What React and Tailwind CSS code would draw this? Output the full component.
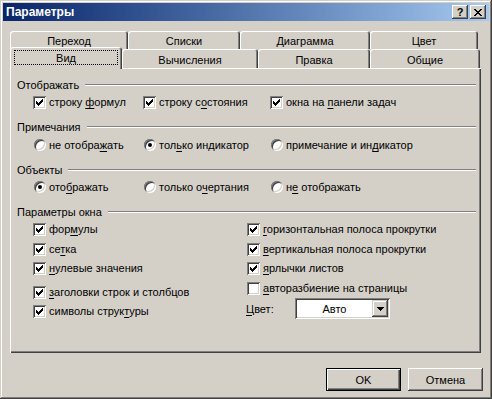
import React from 'react';

const raised = 'shadow-[inset_-1px_-1px_#404040,inset_1px_1px_#ffffff,inset_-2px_-2px_#808080]';
const sunken = 'shadow-[inset_1px_1px_#808080,inset_-1px_-1px_#ffffff,inset_2px_2px_#404040,inset_-2px_-2px_#d4d0c8]';

function U({ children }) {
    return <span className="underline underline-offset-[2px] decoration-1">{children}</span>;
}

function CheckBox({ checked }) {
    return (
        <span className={`w-[13px] h-[13px] shrink-0 bg-white flex items-center justify-center ${sunken}`}>
            {checked && (
                <svg width="7" height="7" viewBox="0 0 7 7" shapeRendering="crispEdges">
                    <path d="M6 0h1v1h-1z M5 1h2v1h-2z M0 2h1v1h-1z M4 2h3v1h-3z M0 3h2v1h-2z M3 3h3v1h-3z M0 4h5v1h-5z M1 5h3v1h-3z M2 6h1v1h-1z" fill="#000" />
                </svg>
            )}
        </span>
    );
}

function Radio({ checked }) {
    return (
        <span className="w-[13px] h-[13px] shrink-0 flex items-center justify-end">
            <span className="w-[12px] h-[12px] rounded-full bg-white flex items-center justify-center shadow-[inset_1px_1px_#808080,inset_-1px_-1px_#ffffff,inset_2px_2px_#404040,inset_-2px_-2px_#d4d0c8]">
                {checked && <span className="w-[4px] h-[4px] rounded-full bg-black" />}
            </span>
        </span>
    );
}

function Item({ radio, checked, w, className = '', children }) {
    return (
        <div className={`flex items-center gap-[3px] h-[14px] ${w || ''} ${className}`}>
            {radio ? <Radio checked={checked} /> : <CheckBox checked={checked} />}
            <span className="whitespace-nowrap">{children}</span>
        </div>
    );
}

function GroupLabel({ children, className = '' }) {
    return (
        <div className={`flex items-center h-[14px] ${className}`}>
            <span className="whitespace-nowrap">{children}</span>
            <div className="flex-1 ml-[6px] h-[2px] border-t border-t-[#808080] border-b border-b-white" />
        </div>
    );
}

function Tab({ w, children }) {
    return (
        <div className={`${w} flex items-center justify-center pt-[2px] rounded-t-[3px] shadow-[inset_1px_1px_#ffffff,inset_-1px_0_#404040,inset_-2px_0_#808080]`}>
            {children}
        </div>
    );
}

function Button({ def, children }) {
    return (
        <div className={`w-[75px] h-[23px] flex items-center justify-center ${def ? 'border border-black shadow-[inset_1px_1px_#ffffff,inset_-1px_-1px_#404040,inset_-2px_-2px_#808080]' : raised}`}>
            {children}
        </div>
    );
}

export default function App() {
    return (
        <div className="w-[492px] h-[399px] bg-[#d4d0c8] p-[3px] flex flex-col text-[11px] leading-[14px] text-black font-['Liberation_Sans',Arial,sans-serif] shadow-[inset_-1px_-1px_#404040,inset_1px_1px_#d4d0c8,inset_-2px_-2px_#808080,inset_2px_2px_#ffffff]">
            {/* title bar */}
            <div className="h-[18px] flex items-center justify-between pl-[3px] pr-[3px] bg-linear-to-r from-[#0a246a] to-[#a6caf0]">
                <span className="text-white font-bold text-[12px]">Параметры</span>
                <div className="flex gap-[2px]">
                    <div className={`w-[16px] h-[14px] bg-[#d4d0c8] flex items-center justify-center font-bold text-[11px] leading-none ${raised}`}>?</div>
                    <div className={`w-[16px] h-[14px] bg-[#d4d0c8] flex items-center justify-center ${raised}`}>
                        <svg width="8" height="7" viewBox="0 0 8 7" shapeRendering="crispEdges">
                            <path d="M0 0h2v1h-2z M6 0h2v1h-2z M1 1h2v1h-2z M5 1h2v1h-2z M2 2h4v1h-4z M3 3h2v1h-2z M2 4h4v1h-4z M1 5h2v1h-2z M5 5h2v1h-2z M0 6h2v1h-2z M6 6h2v1h-2z" fill="#000" />
                        </svg>
                    </div>
                </div>
            </div>

            <div className="flex flex-col pl-[7px] pt-[10px]">
                {/* tabs */}
                <div className="flex h-[18px]">
                    <Tab w="w-[118px] h-[18px]">Переход</Tab>
                    <Tab w="w-[112px] h-[18px]">Списки</Tab>
                    <Tab w="w-[130px] h-[18px]">Диаграмма</Tab>
                    <Tab w="w-[108px] h-[18px]">Цвет</Tab>
                </div>
                <div className="flex items-end h-[21px] -mt-[2px]">
                    <div className="relative z-10 w-[112px] h-[22px] -mb-[1px] bg-[#d4d0c8] rounded-t-[3px] px-[4px] pt-[3px] pb-[4px] flex shadow-[inset_1px_1px_#ffffff,inset_-1px_0_#404040,inset_-2px_0_#808080]">
                        <div className="flex-1 border border-dotted border-black flex items-center justify-center">Вид</div>
                    </div>
                    <Tab w="w-[136px] h-[19px]">Вычисления</Tab>
                    <Tab w="w-[112px] h-[19px]">Правка</Tab>
                    <Tab w="w-[110px] h-[19px]">Общие</Tab>
                </div>

                {/* panel */}
                <div className="w-[471px] h-[285px] flex flex-col pl-[7px] pr-[5px] pt-[10px] shadow-[inset_1px_1px_#ffffff,inset_-1px_-1px_#404040,inset_-2px_-2px_#808080]">
                    <GroupLabel>Отображать</GroupLabel>
                    <div className="flex pl-[16px] mt-[3px]">
                        <Item checked w="w-[110px]">строку <U>ф</U>ормул</Item>
                        <Item checked w="w-[127px]">строку с<U>о</U>стояния</Item>
                        <Item checked>окна на <U>п</U>анели задач</Item>
                    </div>

                    <GroupLabel className="mt-[11px]">Примечания</GroupLabel>
                    <div className="flex pl-[16px] mt-[4px]">
                        <Item radio w="w-[110px]">не отобра<U>ж</U>ать</Item>
                        <Item radio checked w="w-[127px]">тол<U>ь</U>ко индикатор</Item>
                        <Item radio>примечание и ин<U>д</U>икатор</Item>
                    </div>

                    <GroupLabel className="mt-[11px]">Объекты</GroupLabel>
                    <div className="flex pl-[16px] mt-[3px]">
                        <Item radio checked w="w-[110px]">ото<U>б</U>ражать</Item>
                        <Item radio w="w-[127px]">только о<U>ч</U>ертания</Item>
                        <Item radio>н<U>е</U> отображать</Item>
                    </div>

                    <GroupLabel className="mt-[11px]">Параметры окна</GroupLabel>
                    <div className="grid grid-cols-[214px_1fr] pl-[16px] mt-[3px]">
                        <div className="flex flex-col">
                            <Item checked>фор<U>м</U>улы</Item>
                            <Item checked className="mt-[6px]">се<U>т</U>ка</Item>
                            <Item checked className="mt-[5px]"><U>н</U>улевые значения</Item>
                            <Item checked className="mt-[10px]"><U>з</U>аголовки строк и столбцов</Item>
                            <Item checked className="mt-[5px]">символы струк<U>т</U>уры</Item>
                        </div>
                        <div className="flex flex-col">
                            <Item checked><U>г</U>оризонтальная полоса прокрутки</Item>
                            <Item checked className="mt-[6px]"><U>в</U>ертикальная полоса прокрутки</Item>
                            <Item checked className="mt-[5px]"><U>я</U>рлычки листов</Item>
                            <Item className="mt-[6px]"><U>а</U>вторазбиение на страницы</Item>
                            <div className="flex items-center h-[21px] mt-[3px] -ml-[1px]">
                                <span className="w-[49px]"><U>Ц</U>вет:</span>
                                <div className={`w-[95px] h-[21px] bg-white flex p-[2px] ${sunken}`}>
                                    <div className="flex-1 flex items-center justify-center">Авто</div>
                                    <div className={`w-[16px] h-[17px] bg-[#d4d0c8] flex items-center justify-center shadow-[inset_-1px_-1px_#404040,inset_1px_1px_#d4d0c8,inset_-2px_-2px_#808080,inset_2px_2px_#ffffff]`}>
                                        <svg width="7" height="4" viewBox="0 0 7 4" shapeRendering="crispEdges">
                                            <path d="M0 0h7v1h-7z M1 1h5v1h-5z M2 2h3v1h-3z M3 3h1v1h-1z" fill="#000" />
                                        </svg>
                                    </div>
                                </div>
                            </div>
                        </div>
                    </div>
                </div>

                {/* buttons */}
                <div className="flex justify-end gap-[7px] mt-[15px] pr-[6px]">
                    <Button def>OK</Button>
                    <Button>Отмена</Button>
                </div>
            </div>
        </div>
    );
}
